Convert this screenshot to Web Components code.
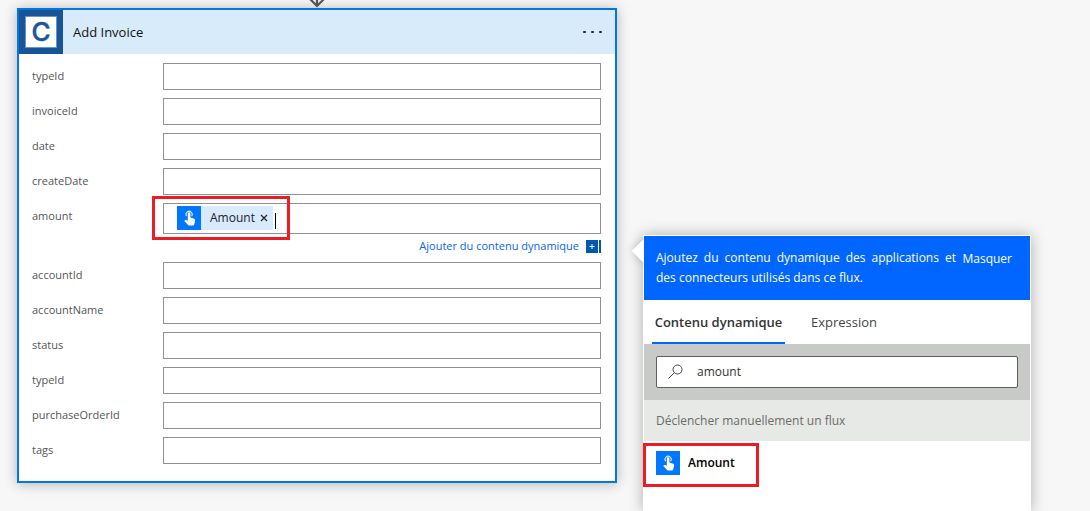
<!DOCTYPE html>
<html lang="fr">
<head>
<meta charset="utf-8">
<title>Add Invoice</title>
<style>
  html, body { margin: 0; }
  body { background: #f7f7f7; font-family: "Open Sans", "Noto Sans", sans-serif; color: #333; overflow: hidden; }
</style>
</head>
<body>
<flow-designer></flow-designer>
<script>
const define = (name, html, setup) => {
  const template = document.createElement('template');
  template.innerHTML = `<style>*, *::before, *::after { box-sizing: border-box; }</style>${html}`;
  customElements.define(name, class extends HTMLElement {
    constructor() {
      super();
      this.attachShadow({ mode: 'open' }).append(template.content.cloneNode(true));
    }
    connectedCallback() { if (setup) setup(this, this.shadowRoot); }
  });
};

define('touch-icon', `
  <style>
    :host { display: block; width: 24px; height: 24px; background: #0077ff; flex: none; }
    svg { display: block; }
  </style>
  <svg width="24" height="24" viewBox="0 0 24 24" aria-hidden="true">
    <path d="M9.600 10.200A3.100 3.100 0 1 1 14.600 10.200" fill="none" stroke="#d5e8ff" stroke-width="1.100"/>
    <path d="M10.800 7.600a1.300 1.300 0 0 1 2.600 0v4l3.800 1.100q1.100.4.9 1.600l-.7 3.700q-.3 1.500-1.600 1.500h-3.400q-.8 0-1.300-.6L7.300 14.900l.6-.7q.5-.5 1.200-.2l1.700.7z" fill="#fff"/>
  </svg>`);

define('mark-frame', `
  <style>
    :host { display: block; position: absolute; border: 3px solid #ed1c24; box-sizing: border-box; pointer-events: none; z-index: 2; }
  </style>`);

define('dynamic-token', `
  <style>
    :host { display: flex; align-items: center; height: 24px; background: #d8eafd; color: #222; flex: none; width: 96px; }
    span { font-size: 12px; line-height: 24px; padding-left: 9px; flex: 1; white-space: nowrap; }
    button { border: 0; background: none; padding: 0; width: 18px; height: 24px; display: grid; place-items: center; }
  </style>
  <touch-icon></touch-icon>
  <span><slot></slot></span>
  <button type="button" aria-label="Supprimer">
    <svg width="8" height="8" viewBox="0 0 8 8"><path d="M1 1l6 6M7 1L1 7" stroke="#222" stroke-width="1.2"/></svg>
  </button>`);

define('field-row', `
  <style>
    :host { display: grid; grid-template-columns: 131px 1fr; align-items: start; }
    label { font-size: 11px; line-height: 26px; color: #555; }
    .box { position: relative; display: flex; align-items: center; min-height: 27px; border: 1px solid #919191; background: #fff; }
    input { flex: 1; min-width: 0; height: 25px; padding: 0 8px; border: 0; outline: 0; background: none; font: inherit; font-size: 12px; }
    :host([filled]) .box { height: 31px; padding-left: 13px; }
    :host([filled]) ::slotted(dynamic-token) { margin-bottom: 2px; }
  </style>
  <label for="value"></label>
  <div class="box"><slot></slot><input id="value" type="text"></div>`,
  (host, root) => { root.querySelector('label').textContent = host.getAttribute('label'); });

define('action-card', `
  <style>
    :host { display: block; border: 2px solid #0078e0; background: #fff; box-shadow: 0 1px 12px rgba(0,0,0,.28); }
    header { display: flex; align-items: center; height: 44px; background: #d8ebfa; }
    .logo { width: 44px; height: 44px; background: #185498; flex: none; display: grid; place-items: center; }
    h2 { flex: 1; margin: 0; padding-left: 10px; font-size: 13px; line-height: 20px; font-weight: 400; color: #111; }
    button { border: 0; background: none; padding: 0; width: 24px; height: 24px; margin-right: 10px; }
    button svg, .logo svg { display: block; }
    .fields { display: flex; flex-direction: column; gap: 8px; padding: 9px 14px 17px 13px; }
    .caret { width: 1px; height: 16px; background: #000; margin: 5px 0 0 2px; }
    .add { display: flex; justify-content: flex-end; align-items: center; gap: 6px; height: 20px; margin-top: -6px; margin-bottom: -2px; font-size: 11px; line-height: 20px; color: #0a64f0; text-decoration: none; }
    mark-frame { left: -12px; top: -8px; width: 138px; height: 44px; }
  </style>
  <header>
    <div class="logo">
      <svg width="32" height="32" viewBox="0 0 32 32" role="img" aria-label="C">
        <rect x=".5" y=".5" width="31" height="31" fill="#fff" stroke="#6d93c0"/>
        <text x="16" y="25" text-anchor="middle" font-family="Inter" font-weight="500" font-size="26" fill="#1b559b" stroke="#1b559b" stroke-width=".5">C</text>
      </svg>
    </div>
    <h2>Add Invoice</h2>
    <button type="button" aria-label="Menu">
      <svg width="24" height="24"><g fill="#222"><rect x="2" y="11" width="3" height="2" rx="1"/><rect x="10" y="11" width="3" height="2" rx="1"/><rect x="18" y="11" width="3" height="2" rx="1"/></g></svg>
    </button>
  </header>
  <div class="fields">
    <field-row label="typeId"></field-row>
    <field-row label="invoiceId"></field-row>
    <field-row label="date"></field-row>
    <field-row label="createDate"></field-row>
    <field-row label="amount" filled><dynamic-token>Amount</dynamic-token><span class="caret"></span><mark-frame></mark-frame></field-row>
    <a class="add" href="#">Ajouter du contenu dynamique
      <svg width="16" height="13"><path d="M1 0h12v13H1zM14 0h2v13h-2z" fill="#0058ad"/><path d="M4.500 6.500h5M7 4v5" stroke="#fff"/></svg>
    </a>
    <field-row label="accountId"></field-row>
    <field-row label="accountName"></field-row>
    <field-row label="status"></field-row>
    <field-row label="typeId"></field-row>
    <field-row label="purchaseOrderId"></field-row>
    <field-row label="tags"></field-row>
  </div>`);

define('content-panel', `
  <style>
    :host { display: block; position: relative; border: 1px solid #fff; background: #fff; box-shadow: 0 0 14px rgba(0,0,0,.3); }
    .beak { position: absolute; left: -9px; top: 7px; width: 16px; height: 16px; background: #fff; transform: rotate(45deg); box-shadow: 0 0 10px rgba(0,0,0,.2); }
    header { position: relative; display: flex; align-items: flex-start; padding: 12px; background: #0066ff; color: #fff; font-size: 12px; line-height: 20px; }
    p { flex: 1; margin: 0; text-align: justify; }
    header button { flex: none; width: 62px; margin-top: 1px; border: 0; padding: 0 6px; background: none; color: inherit; font: inherit; text-align: right; }
    .tabs { display: flex; gap: 18px; padding: 0 8px; height: 44px; background: #fff; position: relative; }
    .tabs button { border: 0; border-bottom: 2px solid transparent; background: none; padding: 2px 0 0; width: 133px; font: inherit; font-size: 13px; line-height: 20px; color: #444; }
    .tabs button[aria-selected=true] { font-weight: 600; color: #333; border-color: #0066ff; }
    .tabs button:last-child { width: 82px; }
    .search { padding: 12px; background: #c8cac7; }
    .search label { display: flex; align-items: center; height: 32px; border: 1px solid #605e5c; border-radius: 2px; background: #fff; padding-left: 11px; gap: 14px; }
    .search svg { flex: none; }
    input { flex: 1; min-width: 0; border: 0; outline: 0; padding: 0; background: none; font: inherit; font-size: 12px; line-height: 20px; color: #333; }
    h3 { margin: 0; padding: 0 12px; height: 41px; font-size: 12px; line-height: 42px; font-weight: 400; color: #6b6b6b; background: #e7e9e6; }
    .item { position: relative; display: flex; }
    .item button { display: flex; align-items: center; gap: 8px; border: 0; background: none; padding: 10px 12px; font: inherit; font-size: 12px; line-height: 24px; font-weight: 600; color: #000; }
    mark-frame { left: -1px; top: 2px; width: 116px; height: 44px; }
  </style>
  <div class="beak"></div>
  <header>
    <p>Ajoutez du contenu dynamique des applications et des connecteurs utilisés dans ce flux.</p>
    <button type="button">Masquer</button>
  </header>
  <div class="tabs" role="tablist">
    <button type="button" role="tab" aria-selected="true">Contenu dynamique</button>
    <button type="button" role="tab" aria-selected="false">Expression</button>
  </div>
  <div class="search">
    <label>
      <svg width="15" height="16" viewBox="0 0 15 16" aria-hidden="true"><g fill="none" stroke="#444"><circle cx="9.500" cy="5.500" r="4.500"/><path d="M6.200 8.800L.5 14.500"/></g></svg>
      <input type="text" value="amount" aria-label="Rechercher">
    </label>
  </div>
  <h3>Déclencher manuellement un flux</h3>
  <div class="item"><button type="button"><touch-icon></touch-icon>Amount</button><mark-frame></mark-frame></div>`);

define('flow-designer', `
  <style>
    :host { display: flex; align-items: flex-start; gap: 26px; min-height: 100vh; padding: 8px 59px 0 17px; position: relative; box-sizing: border-box; }
    .step { flex: 1; min-width: 0; position: relative; }
    .arrow { position: absolute; left: 50%; top: -8px; margin-left: -9px; z-index: 1; }
    content-panel { flex: 0 0 388px; align-self: stretch; margin-top: 227px; }
  </style>
  <div class="step">
    <svg class="arrow" width="18" height="8" aria-hidden="true"><path d="M9 0v6M2 -1l7 7 7-7" fill="none" stroke="#555" stroke-width="2.200"/></svg>
    <action-card></action-card>
  </div>
  <content-panel></content-panel>`);
</script>
</body>
</html>
